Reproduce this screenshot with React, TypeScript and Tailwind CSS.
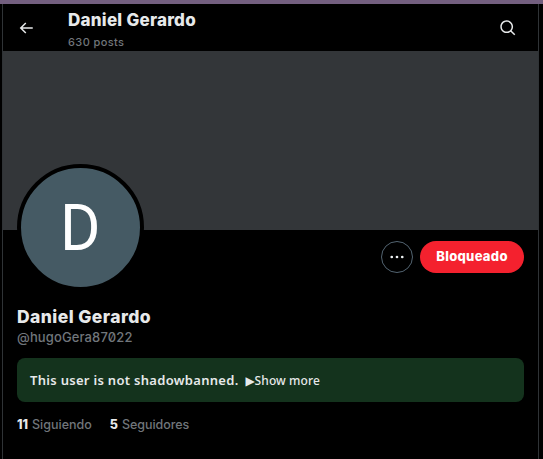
import React from "react";

interface ProfileConfig {
  name: string;
  handle: string;
  posts: string;
  following: number;
  followers: number;
}

const profile: ProfileConfig = {
  name: "Daniel Gerardo",
  handle: "@hugoGera87022",
  posts: "630 posts",
  following: 11,
  followers: 5,
};

function BackIcon() {
  return (
    <svg viewBox="0 0 24 24" className="h-[18px] w-[18px]" fill="#e7e9ea">
      <path d="M7.414 13l5.043 5.04-1.414 1.42L3.586 12l7.457-7.46 1.414 1.42L7.414 11H21v2H7.414z" />
    </svg>
  );
}

function SearchIcon() {
  return (
    <svg viewBox="0 0 24 24" className="h-[18px] w-[18px]" fill="#e7e9ea">
      <path d="M10.25 3.75c-3.59 0-6.5 2.91-6.5 6.5s2.91 6.5 6.5 6.5c1.795 0 3.419-.726 4.596-1.904 1.178-1.177 1.904-2.801 1.904-4.596 0-3.59-2.91-6.5-6.5-6.5zm-8.5 6.5c0-4.694 3.806-8.5 8.5-8.5s8.5 3.806 8.5 8.5c0 1.986-.682 3.815-1.824 5.262l4.781 4.781-1.414 1.414-4.781-4.781c-1.447 1.142-3.276 1.824-5.262 1.824-4.694 0-8.5-3.806-8.5-8.5z" />
    </svg>
  );
}

function MoreIcon() {
  return (
    <svg viewBox="0 0 24 24" className="h-[18px] w-[18px]" fill="#eff3f4">
      <circle cx="5" cy="12" r="1.8" />
      <circle cx="12" cy="12" r="1.8" />
      <circle cx="19" cy="12" r="1.8" />
    </svg>
  );
}

export default function App() {
  return (
    <div className="h-[459px] w-[543px] overflow-hidden bg-black font-['Inter','Liberation_Sans',sans-serif] text-[#e7e9ea]">
      <div className="h-1 bg-[#735f7f]" />
      <div className="ml-0.5 flex h-[455px] w-[537px] flex-col border-x border-[#2f3336]">
        {/* Top bar */}
        <header className="flex h-[47px] shrink-0 items-center pr-[21px] pl-3.5">
          <button aria-label="Volver" className="pt-px">
            <BackIcon />
          </button>
          <div className="ml-[33px] flex-1 pt-[5px]">
            <h2 className="h-[23px] text-[17px] leading-[23px] font-extrabold tracking-[0.25px]">{profile.name}</h2>
            <p className="h-[20px] text-[11px] leading-[20px] font-medium tracking-[0.4px] text-[#71767b]">{profile.posts}</p>
          </div>
          <button aria-label="Buscar">
            <SearchIcon />
          </button>
        </header>

        {/* Banner */}
        <div className="h-[179px] shrink-0 bg-[#333639]" />

        <main className="flex flex-col px-3.5">
          <div className="flex h-[72px] items-start justify-between">
            <div className="-mt-[66px] flex h-[127px] w-[127px] shrink-0 items-center justify-center rounded-full border-4 border-black bg-[#455a64]">
              <span className="scale-x-95 pt-0.5 font-['Roboto',sans-serif] text-[65px] leading-none text-white">D</span>
            </div>
            <div className="mt-[11px] flex gap-[7px]">
              <button aria-label="Más opciones" className="flex h-8 w-8 items-center justify-center rounded-full border border-[#536471]">
                <MoreIcon />
              </button>
              <button className="h-8 w-[104px] rounded-full bg-[#f4212e] text-[13px] font-extrabold tracking-[0.3px] text-white">Bloqueado</button>
            </div>
          </div>

          <h1 className="mt-1 h-[22px] text-[17.5px] leading-[22px] font-extrabold tracking-[0.42px]">{profile.name}</h1>
          <p className="h-[18px] text-[13px] leading-[18px] font-medium tracking-[0.12px] text-[#71767b] [font-feature-settings:'zero']">{profile.handle}</p>

          {/* Account status */}
          <div className="mt-3 flex h-11 items-center rounded-lg bg-[#14331d] px-[13px] pt-px font-['Noto_Sans',sans-serif] text-[13px] whitespace-pre">
            <span className="font-semibold tracking-[0.3px]">This user is not shadowbanned.</span>
            <button className="ml-[7px] flex items-center text-[12px] font-medium">
              <span className="w-[9px] font-['DejaVu_Sans',sans-serif]">▶</span>
              <span className="tracking-[0.1px]">Show more</span>
            </button>
          </div>

          <div className="mt-[13px] flex h-5 items-center gap-[18px] text-[12.5px] leading-5">
            <span className="flex gap-1">
              <b className="font-extrabold">{profile.following}</b>
              <span className="font-medium text-[#71767b]">Siguiendo</span>
            </span>
            <span className="flex gap-1">
              <b className="font-extrabold">{profile.followers}</b>
              <span className="font-medium tracking-[-0.05px] text-[#71767b]">Seguidores</span>
            </span>
          </div>
        </main>
      </div>
    </div>
  );
}
